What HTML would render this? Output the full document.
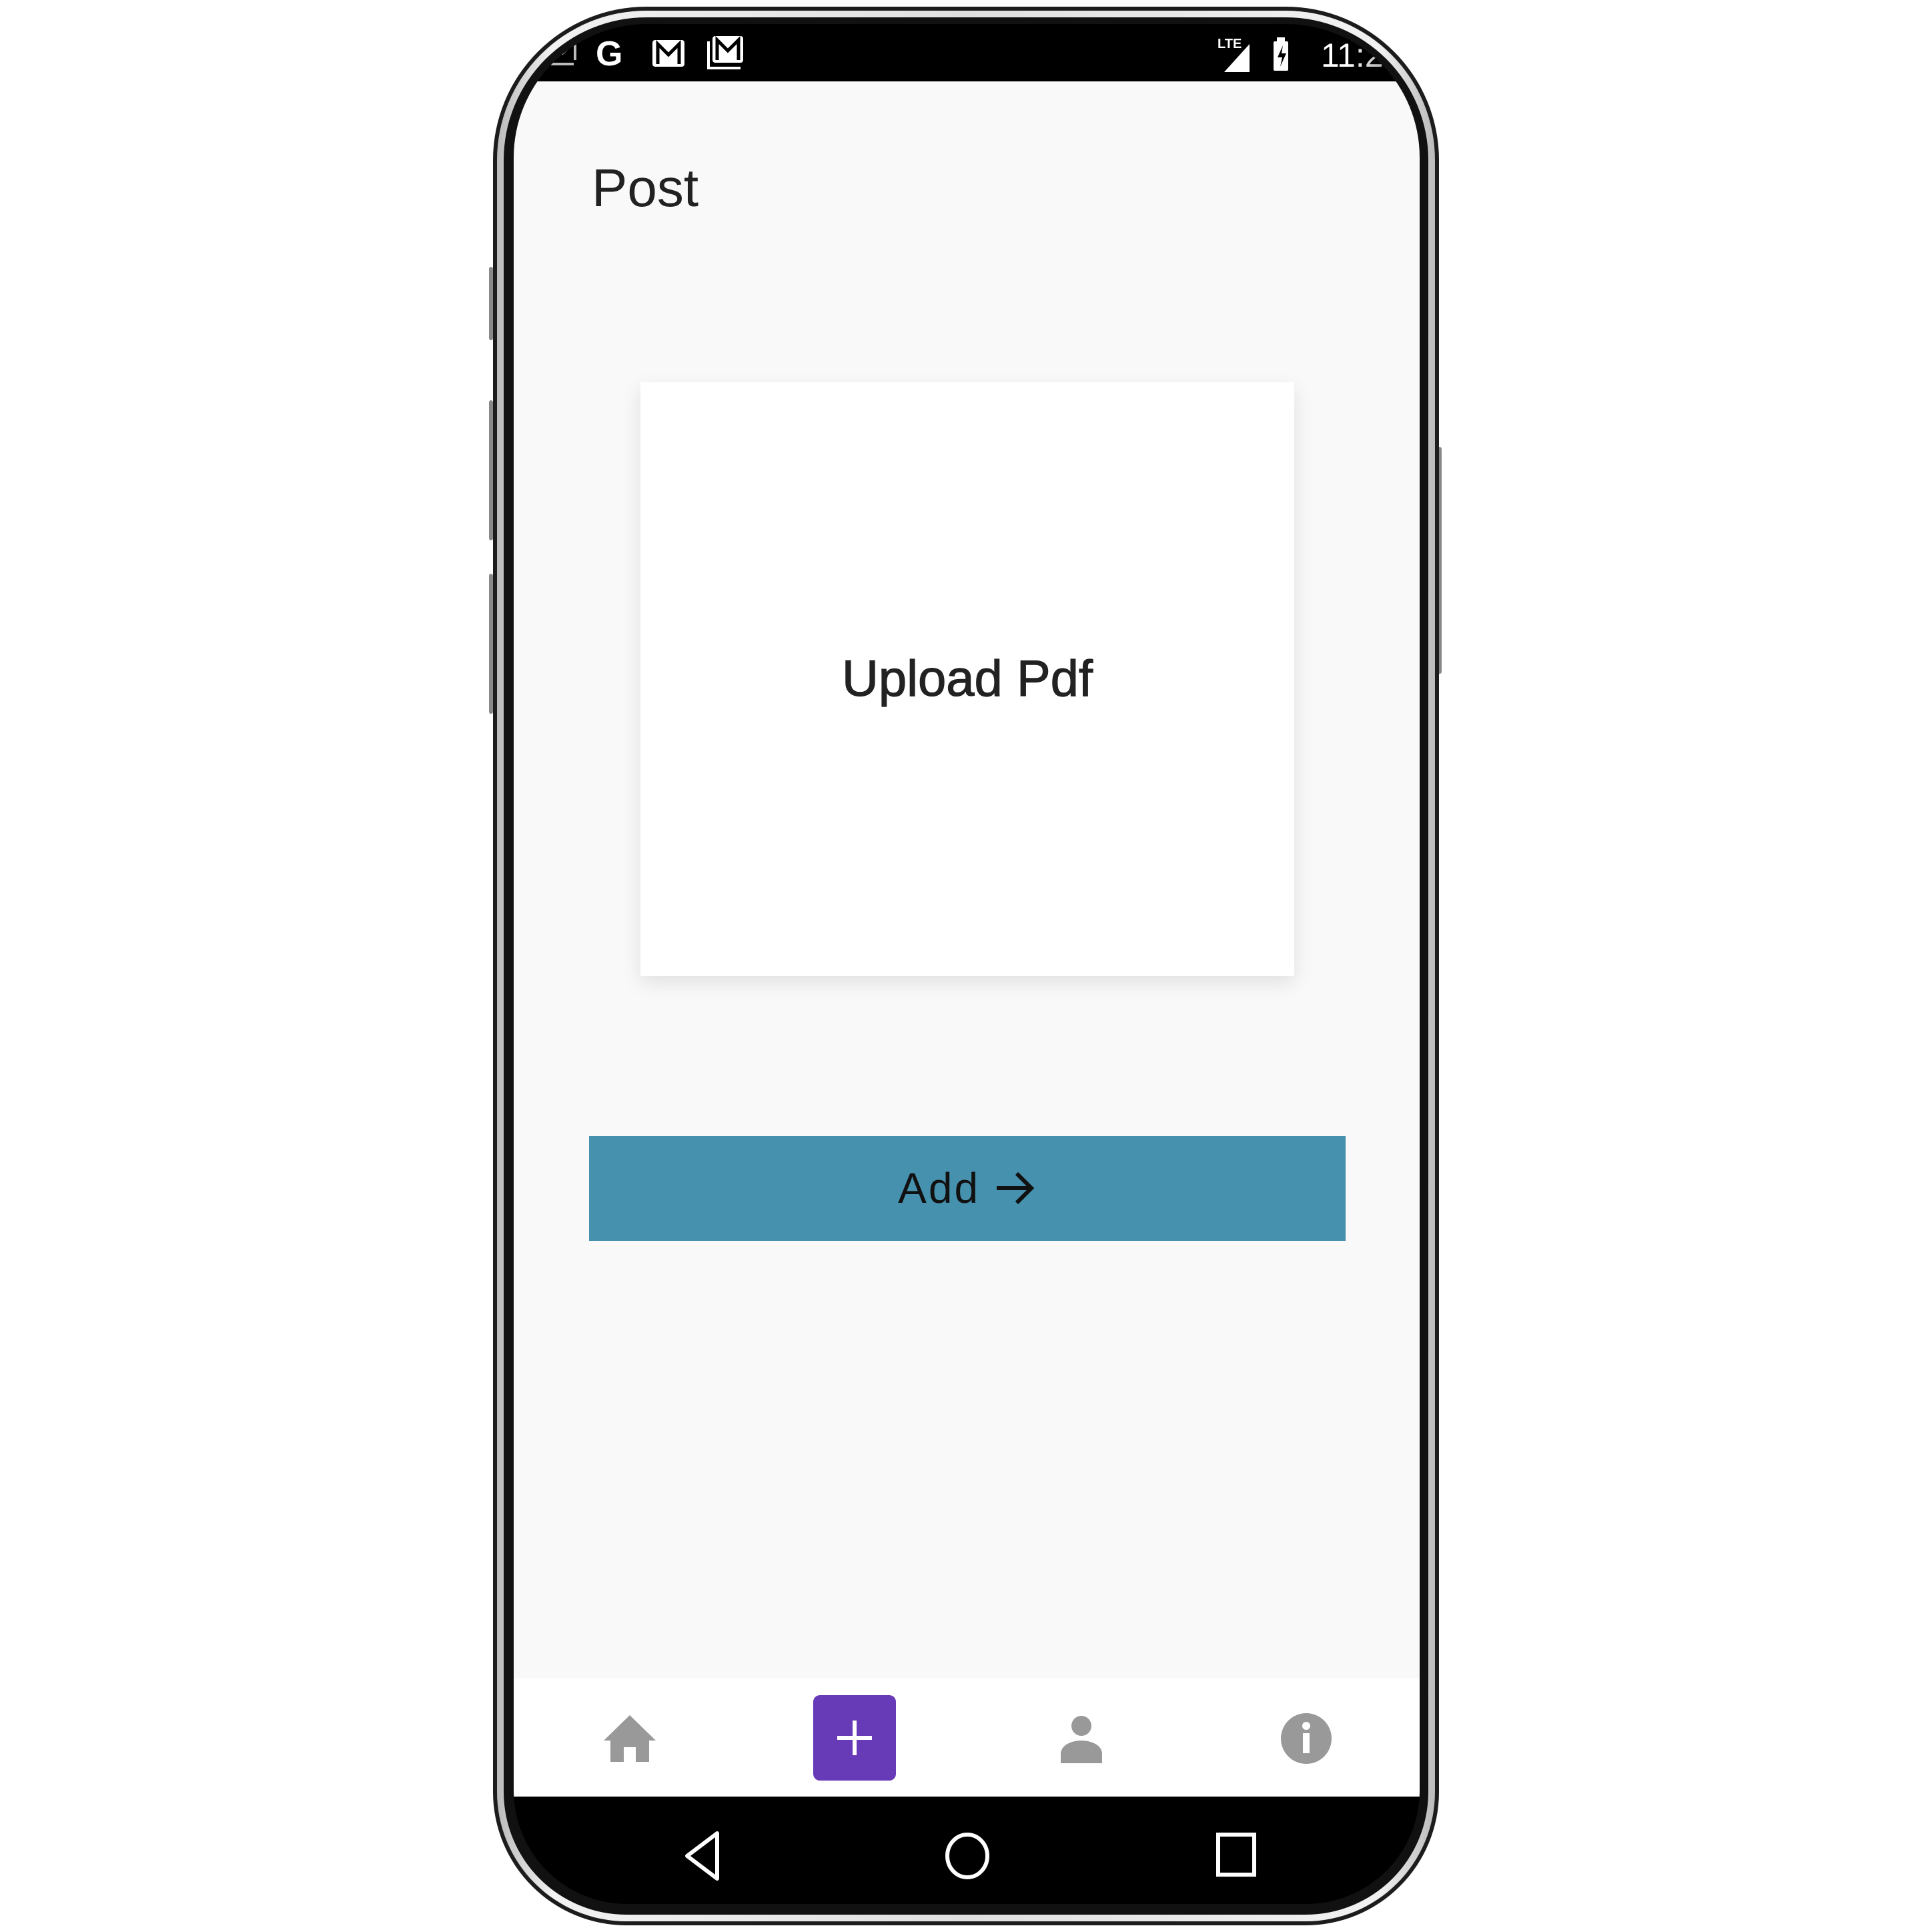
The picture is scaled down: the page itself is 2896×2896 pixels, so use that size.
<!DOCTYPE html>
<html><head><meta charset="utf-8"><style>
html,body{margin:0;padding:0;background:#fff;width:2896px;height:2896px;overflow:hidden;font-family:"Liberation Sans",sans-serif}
.abs{position:absolute}
#o1{left:739px;top:10px;width:1418px;height:2876px;border-radius:230px 230px 200px 200px;background:#1c1c1c}
#o2{left:745px;top:16px;width:1406px;height:2864px;border-radius:224px 224px 194px 194px;background:linear-gradient(90deg,#bbb,#f2f2f2 6%,#e0e0e0 50%,#f2f2f2 94%,#bbb)}
#o3{left:755px;top:26px;width:1386px;height:2844px;border-radius:214px 214px 184px 184px;background:#111}
#scr{left:770px;top:36px;width:1358px;height:2818px;border-radius:200px 200px 170px 170px;background:#000;overflow:hidden}
#content{left:0;top:86px;width:1358px;height:2394px;background:#f9f9f9}
#bnav{left:0;top:2480px;width:1358px;height:177px;background:#fff}
.side{background:#888;width:6px;border-radius:3px}
</style></head><body>
<div class="abs side" style="left:733px;top:400px;height:110px"></div>
<div class="abs side" style="left:733px;top:600px;height:210px"></div>
<div class="abs side" style="left:733px;top:860px;height:210px"></div>
<div class="abs side" style="left:2155px;top:670px;height:340px"></div>
<div id="o1" class="abs"></div>
<div id="o2" class="abs"></div>
<div id="o3" class="abs"></div>
<div id="scr" class="abs">
  <svg class="abs" style="left:40px;top:14px" width="320" height="56" viewBox="0 0 320 56">
    <g fill="none" stroke="#bbb" stroke-width="4"><path d="M8 46h42M14 40V14h38v26M16 14l17 16 17-16"/></g>
    <text x="83" y="48" fill="#fff" font-size="52" font-weight="bold" font-family="Liberation Sans">G</text>
    <rect x="168" y="10" width="48" height="40" rx="4" fill="#fff"/>
    <path d="M176 46V16l16 16 16-16v30" fill="none" stroke="#000" stroke-width="5"/>
    <path d="M252 12v40h48" fill="none" stroke="#fff" stroke-width="4"/>
    <rect x="258" y="4" width="46" height="40" rx="4" fill="#fff"/>
    <path d="M265 40V10l16 16 16-16v30" fill="none" stroke="#000" stroke-width="5"/>
  </svg>
  <svg class="abs" style="left:1055px;top:14px" width="130" height="62" viewBox="0 0 130 62">
    <text x="0" y="22" fill="#fff" font-size="20" font-weight="bold" font-family="Liberation Sans">LTE</text>
    <path d="M10 58L48 16V58Z" fill="#fff"/>
    <rect x="84" y="12" width="22" height="44" rx="2" fill="#fff"/><rect x="89" y="6" width="12" height="8" fill="#fff"/>
    <path d="M98 18l-8 18h7l-3 14 9-20h-7z" fill="#000"/>
  </svg>
  <div class="abs" style="left:1210px;top:18px;color:#fff;font-size:50px">11:2</div>
  <div class="abs" style="left:0;top:0;width:1358px;height:86px;background:linear-gradient(90deg,transparent 92%,rgba(0,0,0,.6))"></div>
  <div id="content" class="abs">
    <div class="abs" style="left:117px;top:114px;font-size:80px;color:#222">Post</div>
    <div class="abs" style="left:190px;top:451px;width:980px;height:890px;background:#fff;box-shadow:0 10px 28px rgba(0,0,0,.1)"></div>
    <div class="abs" style="left:190px;top:852px;width:980px;text-align:center;font-size:76px;color:#222;-webkit-text-stroke:1.2px #222">Upload Pdf</div>
    <div class="abs" style="left:113px;top:1581px;width:1134px;height:157px;background:#4691ae"></div>
    <div class="abs" style="left:113px;top:1622px;width:1134px;text-align:center;font-size:64px;color:#111;letter-spacing:3px">Add <svg width="64" height="56" viewBox="0 0 64 56" style="vertical-align:-6px"><path d="M4 28h52M34 6l22 22-22 22" fill="none" stroke="#111" stroke-width="6"/></svg></div>
  </div>
  <div id="bnav" class="abs">
    <svg class="abs" style="left:135px;top:55px" width="78" height="70" viewBox="0 0 78 70"><path d="M39 0L0 38h10v32h20V48h18v22h20V38h10z" fill="#999"/></svg>
    <div class="abs" style="left:449px;top:25px;width:124px;height:128px;border-radius:10px;background:#673ab7"></div>
    <svg class="abs" style="left:481px;top:59px" width="60" height="60"><path d="M30 4v52M4 30h52" stroke="#fff" stroke-width="6"/></svg>
    <svg class="abs" style="left:820px;top:55px" width="62" height="72" viewBox="0 0 62 72"><circle cx="31" cy="16" r="15" fill="#999"/><path d="M0 72V58c0-14 18-20 31-20s31 6 31 20v14z" fill="#999"/></svg>
    <svg class="abs" style="left:1150px;top:52px" width="76" height="76" viewBox="0 0 76 76"><circle cx="38" cy="38" r="38" fill="#999"/><rect x="33" y="30" width="10" height="30" fill="#fff"/><circle cx="38" cy="19" r="6" fill="#fff"/></svg>
  </div>
  <svg class="abs" style="left:250px;top:2706px" width="70" height="80" viewBox="0 0 70 80"><path d="M55 6L10 40l45 34z" fill="none" stroke="#fff" stroke-width="6" stroke-linejoin="round"/></svg>
  <svg class="abs" style="left:645px;top:2706px" width="70" height="80"><ellipse cx="35" cy="40" rx="30" ry="32" fill="none" stroke="#fff" stroke-width="6"/></svg>
  <svg class="abs" style="left:1050px;top:2708px" width="66" height="74"><rect x="6" y="6" width="54" height="60" fill="none" stroke="#fff" stroke-width="6"/></svg>
</div>
</body></html>
